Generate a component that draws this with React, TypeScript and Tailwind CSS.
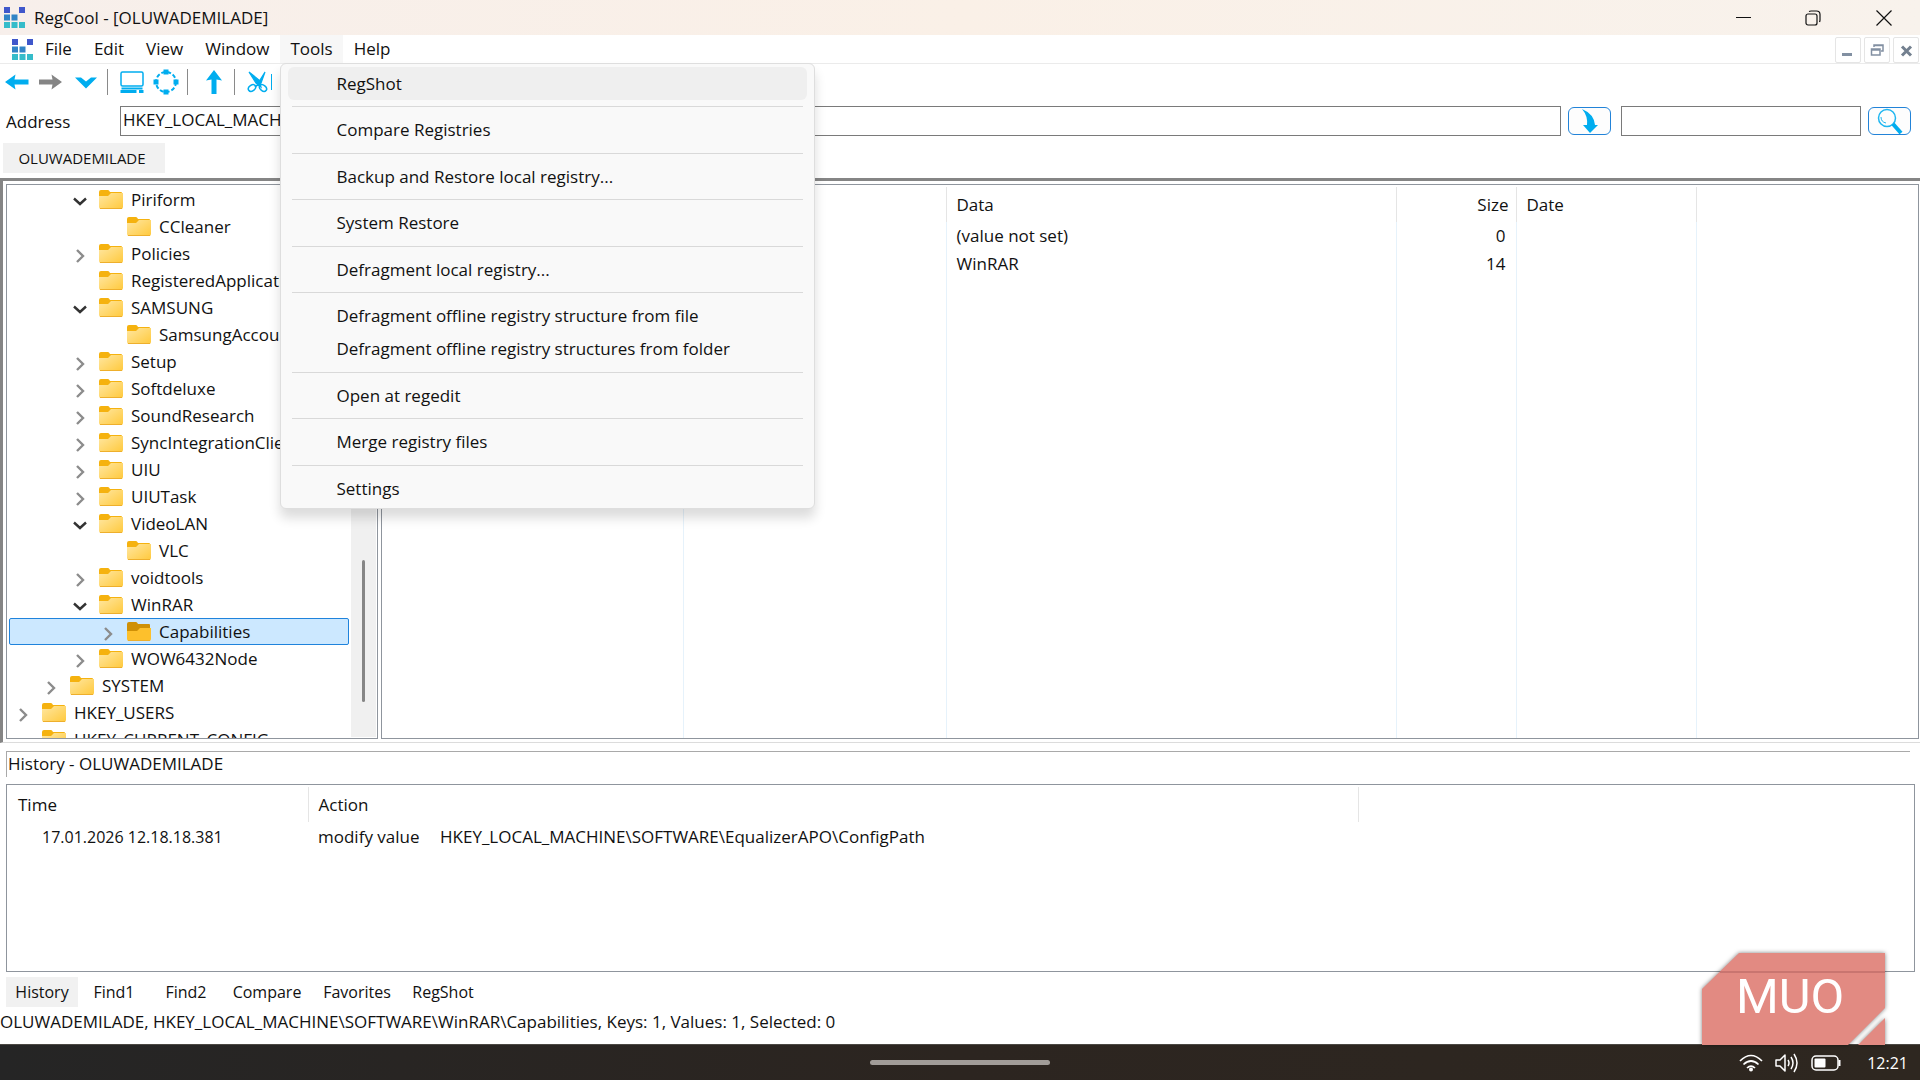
// src/App.tsx
import React, { useState } from 'react';

interface TreeNode {
  name: string;
  level: 1 | 2 | 3 | 4;
  state: 'open' | 'closed' | 'leaf';
}

const treeNodes: TreeNode[] = [
  { name: 'Piriform', level: 3, state: 'open' },
  { name: 'CCleaner', level: 4, state: 'leaf' },
  { name: 'Policies', level: 3, state: 'closed' },
  { name: 'RegisteredApplications', level: 3, state: 'leaf' },
  { name: 'SAMSUNG', level: 3, state: 'open' },
  { name: 'SamsungAccount', level: 4, state: 'leaf' },
  { name: 'Setup', level: 3, state: 'closed' },
  { name: 'Softdeluxe', level: 3, state: 'closed' },
  { name: 'SoundResearch', level: 3, state: 'closed' },
  { name: 'SyncIntegrationClients', level: 3, state: 'closed' },
  { name: 'UIU', level: 3, state: 'closed' },
  { name: 'UIUTask', level: 3, state: 'closed' },
  { name: 'VideoLAN', level: 3, state: 'open' },
  { name: 'VLC', level: 4, state: 'leaf' },
  { name: 'voidtools', level: 3, state: 'closed' },
  { name: 'WinRAR', level: 3, state: 'open' },
  { name: 'Capabilities', level: 4, state: 'closed' },
  { name: 'WOW6432Node', level: 3, state: 'closed' },
  { name: 'SYSTEM', level: 2, state: 'closed' },
  { name: 'HKEY_USERS', level: 1, state: 'closed' },
  { name: 'HKEY_CURRENT_CONFIG', level: 1, state: 'leaf' }
];

const levelPadding = {
  1: 'pl-[5px]',
  2: 'pl-[33px]',
  3: 'pl-[62px]',
  4: 'pl-[90px]'
};

// Each group is divided from the next one by a line
const toolsMenu = [
  ['RegShot'],
  ['Compare Registries'],
  ['Backup and Restore local registry...'],
  ['System Restore'],
  ['Defragment local registry...'],
  ['Defragment offline registry structure from file', 'Defragment offline registry structures from folder'],
  ['Open at regedit'],
  ['Merge registry files'],
  ['Settings']
];

const values = [
  { data: '(value not set)', size: 0 },
  { data: 'WinRAR', size: 14 }
];

const bottomTabs = [
  { name: 'History', width: 'w-[72px]' },
  { name: 'Find1', width: 'w-[72px]' },
  { name: 'Find2', width: 'w-[72px]' },
  { name: 'Compare', width: 'w-[90px]' },
  { name: 'Favorites', width: 'w-[90px]' },
  { name: 'RegShot', width: 'w-[82px]' }
];

function AppLogo() {
  return (
    <svg className="w-[23px] h-[23px] shrink-0" viewBox="0 0 23 23">
      <path d="M1 1h6v6H1zM16 1h6v6h-6z" fill="#3f57cb" />
      <path d="M1 8.500h6v6H1zM8.500 8.500h6v6h-6z" fill="#3184c6" />
      <path d="M1 16h6v6H1zM8.500 16h6v6h-6zM16 16h6v6h-6z" fill="#35bcca" />
    </svg>
  );
}

function FolderIcon({ open }: { open: boolean }) {
  return (
    <svg className="w-6 h-5 shrink-0" viewBox="0 0 24 20">
      <defs>
        <linearGradient id="folderFace" x1="0" y1="0" x2="1" y2="1">
          <stop offset="0" stopColor="#ffe7a2" />
          <stop offset="1" stopColor="#ffc93c" />
        </linearGradient>
      </defs>
      <path d="M0 2Q0 0 2 0h7q1 0 2 2h11q1 0 1 1v6H0z" fill={open ? '#cf9006' : '#f5b20f'} />
      {open ? (
        <path d="M0 9h10l3-3h11v11q0 2-2 2H2q-2 0-2-2z" fill="#fdc02c" />
      ) : (
        <path d="M0 6h9l3-3h12v14q0 2-2 2H2q-2 0-2-2z" fill="url(#folderFace)" />
      )}
      <path d="M1 18.500h22" stroke="#eeaf2c" />
    </svg>
  );
}

function Chevron({ state }: { state: TreeNode['state'] }) {
  return (
    <svg className="w-4 h-4 shrink-0 mt-1" viewBox="0 0 16 16" fill="none" strokeWidth="2.400">
      {state === 'open' && <path d="M2 4.500l6 5.500 6-5.500" stroke="#333" />}
      {state === 'closed' && <path d="M5 2l6 6-6 6" stroke="#8c8c8c" />}
    </svg>
  );
}

function ToolSeparator({ className }: { className: string }) {
  return <div className={`w-px h-[26px] bg-[#8a8a8a] ${className}`} />;
}

function Toolbar() {
  return (
    <div className="flex items-center h-9 pl-1 shrink-0">
      <button aria-label="Back" className="mr-2">
        <svg className="w-[26px] h-[18px]" viewBox="0 0 26 18" fill="#00adef">
          <path d="M1 9l10.500-7.500-1 5H24.500v5H10.500l1 5z" />
        </svg>
      </button>
      <button aria-label="Forward" className="mr-[10px]">
        <svg className="w-[26px] h-[18px]" viewBox="0 0 26 18" fill="#858585">
          <path d="M24 9L13.500 1.500l1 5H1v5h13.500l-1 5z" />
        </svg>
      </button>
      <button aria-label="History list">
        <svg className="w-6 h-[18px]" viewBox="0 0 24 18" fill="#00adef">
          <path d="M1 4.500h6l5 4 5-4h6L12 15.500z" />
        </svg>
      </button>
      <ToolSeparator className="ml-[9px] mr-[11px]" />
      <button aria-label="Computer" className="mr-2">
        <svg className="w-[26px] h-6" viewBox="0 0 26 24" fill="none" stroke="#00adef" strokeWidth="1.500">
          <rect x="2" y="2" width="22" height="14" rx="1.500" />
          <path d="M2.500 18.500h21" strokeWidth="2" />
          <path d="M1.500 21.500h16M20 21.500h4.500" strokeWidth="3" />
        </svg>
      </button>
      <button aria-label="Refresh">
        <svg className="w-[26px] h-[26px]" viewBox="0 0 26 26">
          <circle cx="13" cy="13" r="10" fill="none" stroke="#00adef" strokeWidth="2" strokeDasharray="4 2" />
          <g fill="#00adef">
            <rect x="10.500" y="0.500" width="5" height="5" />
            <rect x="10.500" y="20.500" width="5" height="5" />
            <rect x="0.500" y="10.500" width="5" height="5" />
            <rect x="20.500" y="10.500" width="5" height="5" />
          </g>
        </svg>
      </button>
      <ToolSeparator className="ml-2 mr-[18px]" />
      <button aria-label="Up">
        <svg className="w-4 h-6" viewBox="0 0 16 24" fill="#00adef">
          <path d="M8 0l8 10.500-5.500-1V24h-5V9.500L0 10.500z" />
        </svg>
      </button>
      <ToolSeparator className="ml-3 mr-3" />
      <button aria-label="Cut">
        <svg className="w-[22px] h-[22px]" viewBox="0 0 22 22" fill="none" stroke="#00adef">
          <path d="M2 1l7 11 5 4-2-7zM18 1l-5 8-5 7 6-4z" fill="#00adef" strokeWidth="1.200" />
          <ellipse cx="5" cy="17" rx="4" ry="2.800" transform="rotate(-35 5 17)" strokeWidth="1.500" />
          <ellipse cx="16" cy="17" rx="4" ry="2.800" transform="rotate(40 16 17)" strokeWidth="1.500" />
        </svg>
      </button>
      <div className="w-px h-4 ml-[2px] bg-[#00adef]" />
    </div>
  );
}

function ToolsMenu() {
  return (
    <div
      role="menu"
      className="absolute z-10 left-0 top-full w-[535px] h-[446px] pt-[3px] pb-[3px] px-[7px] flex flex-col bg-[#f9f9f9] border border-[#dedede] rounded-[6px] shadow-[0_9px_12px_rgba(0,0,0,0.14)]"
    >
      {toolsMenu.map((group, index) => (
        <React.Fragment key={group[0]}>
          {index > 0 && (
            <div className="flex-1 flex items-center px-1">
              <hr className="w-full border-[#d9d9d9]" />
            </div>
          )}
          {group.map((item) => (
            <button
              key={item}
              role="menuitem"
              className={`h-[33px] pl-[48px] shrink-0 text-left rounded-[6px] ${item === 'RegShot' ? 'bg-[#efefef]' : ''}`}
            >
              {item}
            </button>
          ))}
        </React.Fragment>
      ))}
    </div>
  );
}

function MenuBar() {
  return (
    <nav className="flex items-stretch h-[29px] shrink-0 border-b border-[#ebebeb]">
      <div className="flex items-center pl-[11px]">
        <AppLogo />
      </div>
      <button className="px-[11px]">File</button>
      <button className="px-[11px]">Edit</button>
      <button className="px-[11px]">View</button>
      <button className="px-[11px]">Window</button>
      <div className="relative flex">
        <button className="px-[10px] bg-[#f7f7f7]">Tools</button>
        <ToolsMenu />
      </div>
      <button className="px-[11px]">Help</button>
      <div className="ml-auto flex gap-[3px] pt-[2px] pr-px">
        <button aria-label="Minimize child" className="w-[26px] h-[26px] border border-[#e5e5e5] rounded-[2px]">
          <svg className="w-6 h-6" viewBox="0 0 24 24">
            <path d="M6 16.500h10" stroke="#8290a2" strokeWidth="3" />
          </svg>
        </button>
        <button aria-label="Restore child" className="w-[26px] h-[26px] border border-[#e5e5e5] rounded-[2px]">
          <svg className="w-6 h-6" viewBox="0 0 24 24" fill="none" stroke="#8290a2" strokeWidth="1.500">
            <path d="M9 9V7h9v6h-2M9 7.500h9" />
            <path d="M6.500 11h8.500v6H6.500zM6.500 12h8.500" />
          </svg>
        </button>
        <button aria-label="Close child" className="w-[26px] h-[26px] border border-[#e5e5e5] rounded-[2px]">
          <svg className="w-6 h-6" viewBox="0 0 24 24">
            <path d="M8 8.500l9 9M17 8.500l-9 9" stroke="#73808f" strokeWidth="3" />
          </svg>
        </button>
      </div>
    </nav>
  );
}

function TitleBar() {
  return (
    <header className="flex items-center h-[35px] pl-[3px] shrink-0 bg-linear-to-r from-[#f7efeb] via-[#faf0e7] to-[#f8f2ec]">
      <AppLogo />
      <h1 className="ml-2">RegCool - [OLUWADEMILADE]</h1>
      <div className="ml-auto flex items-center h-full">
        <button aria-label="Minimize" className="w-[69px] flex justify-center">
          <svg className="w-4 h-4" viewBox="0 0 16 16" stroke="#111" fill="none">
            <path d="M0 7.500h15" />
          </svg>
        </button>
        <button aria-label="Restore" className="w-[69px] flex justify-center">
          <svg className="w-4 h-4" viewBox="0 0 16 16" stroke="#111" fill="none" strokeWidth="1.200">
            <rect x="1" y="4" width="11" height="11" rx="2" />
            <path d="M4 1.500Q5 1 6 1h5.500Q15 1 15 4.500V10q0 1-.5 2" />
          </svg>
        </button>
        <button aria-label="Close" className="w-[73px] flex justify-center">
          <svg className="w-4 h-4" viewBox="0 0 16 16" stroke="#111" fill="none" strokeWidth="1.200">
            <path d="M.5.5l15 15M15.500.5l-15 15" />
          </svg>
        </button>
      </div>
    </header>
  );
}

function AddressBar() {
  const [address, setAddress] = useState('HKEY_LOCAL_MACHINE\\SOFTWARE\\WinRAR\\Capabilities');
  const [query, setQuery] = useState('');

  return (
    <div className="flex items-center mt-[6px] pl-[6px] pr-[9px] shrink-0">
      <label htmlFor="address" className="w-[114px] pt-[2px]">Address</label>
      <input
        id="address"
        type="text"
        value={address}
        onChange={(e) => setAddress(e.target.value)}
        className="flex-1 h-[30px] px-[2px] pb-1 border border-[#7a7a7a]"
      />
      <button aria-label="Go" className="w-[43px] h-7 ml-[7px] mr-[10px] flex justify-center border-[1px] border-[#2283d8] rounded-[6px] bg-[#fdfdfd]">
        <svg className="w-6 h-[26px]" viewBox="0 0 24 26">
          <path d="M4 1Q16 6 17 17l3 0-8 8-7-8 4 0Q10 8 4 1z" fill="#00adef" />
        </svg>
      </button>
      <input
        type="text"
        aria-label="Search"
        value={query}
        onChange={(e) => setQuery(e.target.value)}
        className="w-[240px] h-[30px] px-[2px] border border-[#7a7a7a]"
      />
      <button aria-label="Find" className="w-[43px] h-7 ml-[7px] flex justify-center border-[1px] border-[#2283d8] rounded-[6px] bg-[#fdfdfd]">
        <svg className="w-[26px] h-[26px]" viewBox="0 0 26 26" fill="none" stroke="#1fb6f0">
          <circle cx="10" cy="10" r="8.500" strokeWidth="1.500" />
          <path d="M4 9q0 5 5 6" strokeWidth="1" />
          <path d="M16 16l8 9" strokeWidth="4" stroke="#00adef" />
        </svg>
      </button>
    </div>
  );
}

function RegistryTree() {
  const [selected, setSelected] = useState('Capabilities');

  return (
    <div className="w-[372px] flex shrink-0 border border-[#8f959d] overflow-hidden">
      <ul role="tree" className="flex-1 min-w-0 px-[2px] pt-px">
        {treeNodes.map((node) => (
          <li
            key={node.name}
            role="treeitem"
            aria-selected={node.name === selected}
            onClick={() => setSelected(node.name)}
            className={`flex items-center h-[27px] border rounded-[2px] whitespace-nowrap ${levelPadding[node.level]} ${
              node.name === selected ? 'bg-[#cce8ff] border-[#1f83dc]' : 'border-transparent'
            }`}
          >
            <Chevron state={node.state} />
            <span className="ml-[11px]">
              <FolderIcon open={node.name === selected} />
            </span>
            <span className="ml-2">{node.name}</span>
          </li>
        ))}
      </ul>
      <div className="w-[25px] mr-px mb-px flex justify-center bg-[#f0f0f0]">
        <div className="w-[3px] h-[142px] mt-[375px] rounded-full bg-[#868686]" />
      </div>
    </div>
  );
}

function ValueList() {
  return (
    <div className="flex-1 min-w-0 pt-[2px] border border-[#8f959d] overflow-hidden">
      <table className="w-full h-full table-fixed border-collapse">
        <colgroup>
          <col className="w-[301px]" />
          <col className="w-[263px]" />
          <col className="w-[450px]" />
          <col className="w-[120px]" />
          <col className="w-[180px]" />
          <col />
        </colgroup>
        <thead>
          <tr className="h-[35px] text-left">
            <th className="border-r border-[#e5e5e5]" />
            <th className="border-r border-[#e5e5e5]" />
            <th className="px-[10px] font-normal border-r border-[#e5e5e5]">Data</th>
            <th className="px-[7px] font-normal text-right border-r border-[#e5e5e5]">Size</th>
            <th className="px-[10px] font-normal border-r border-[#e5e5e5]">Date</th>
            <th />
          </tr>
        </thead>
        <tbody>
          {values.map((value) => (
            <tr key={value.data} className="h-7">
              <td className="border-r border-[#e6f2fb]" />
              <td className="border-r border-[#e6f2fb]" />
              <td className="px-[10px] border-r border-[#e6f2fb]">{value.data}</td>
              <td className="px-[10px] text-right border-r border-[#e6f2fb]">{value.size}</td>
              <td className="border-r border-[#e6f2fb]" />
              <td />
            </tr>
          ))}
          <tr>
            <td className="border-r border-[#e6f2fb]" />
            <td className="border-r border-[#e6f2fb]" />
            <td className="border-r border-[#e6f2fb]" />
            <td className="border-r border-[#e6f2fb]" />
            <td className="border-r border-[#e6f2fb]" />
            <td />
          </tr>
        </tbody>
      </table>
    </div>
  );
}

function HistoryPanel() {
  return (
    <section className="shrink-0 pt-2 pl-[6px] pr-[5px]">
      <h2 className="h-[26px] mb-[7px] mr-[5px] pl-px border-t border-l border-[#a9a9a9]">History - OLUWADEMILADE</h2>
      <div className="h-[188px] pt-[2px] border border-[#8f959d]">
        <table className="w-full table-fixed border-collapse">
          <colgroup>
            <col className="w-[301px]" />
            <col className="w-[1050px]" />
            <col />
          </colgroup>
          <thead>
            <tr className="h-[35px] text-left">
              <th className="px-[11px] font-normal border-r border-[#e5e5e5]">Time</th>
              <th className="px-[10px] font-normal border-r border-[#e5e5e5]">Action</th>
              <th />
            </tr>
          </thead>
          <tbody>
            <tr className="h-[30px]">
              <td className="pl-[35px] text-[16px]">17.01.2026 12.18.18.381</td>
              <td className="px-[10px]">
                <span className="inline-block w-[122px]">modify value</span>
                HKEY_LOCAL_MACHINE\SOFTWARE\EqualizerAPO\ConfigPath
              </td>
              <td />
            </tr>
          </tbody>
        </table>
      </div>
    </section>
  );
}

function Taskbar() {
  return (
    <footer className="relative grid grid-cols-3 items-center h-9 shrink-0 px-3 text-[16px] text-white bg-linear-to-r from-[#252525] via-[#2c2520] to-[#2e2720] border-t border-[#4b4843]">
      <div />
      <div className="w-[180px] h-[5px] justify-self-center rounded-full bg-[#a19c98]" />
      <div className="flex items-center justify-end">
        <svg className="w-6 h-[18px] mr-3" viewBox="0 0 24 18" fill="none" stroke="#fff" strokeWidth="1.700">
          <path d="M1 7Q12-4 23 7M4.500 10.500q7.500-7 15 0M8 14q4-4 8 0" />
          <circle cx="12" cy="15.500" r="2" fill="#fff" stroke="none" />
        </svg>
        <svg className="w-6 h-5 mr-3" viewBox="0 0 24 20" fill="none" stroke="#fff" strokeWidth="1.500">
          <path d="M1 7h4l5-5v16l-5-5H1z" strokeLinejoin="round" />
          <path d="M13 7q2 3 0 6M16 4q4 6 0 12M19 1q6 9 0 18" />
        </svg>
        <svg className="w-[30px] h-4 mr-[26px]" viewBox="0 0 30 16" fill="none" stroke="#fff" strokeWidth="1.500">
          <rect x="1" y="1" width="26" height="14" rx="4" />
          <rect x="3.500" y="3.500" width="11" height="9" rx="1" fill="#fff" stroke="none" />
          <path d="M28.500 5v6" strokeWidth="2" />
        </svg>
        <time>12:21</time>
      </div>
      <Watermark />
    </footer>
  );
}

function Watermark() {
  return (
    <div className="absolute right-[33px] bottom-full w-[186px] h-[93px]">
      <svg className="absolute inset-0 w-full h-full drop-shadow-[0_0_2px_rgba(0,0,0,0.5)]" viewBox="0 0 186 93" fill="#e28a82">
        <path d="M1 37L38 1h146v55l-37 37H1z" />
        <path d="M184 66v27h-27z" />
        <path d="M19 20h165" stroke="#b0605e" />
      </svg>
      <span className="relative block pt-[21px] pl-[35px] text-[49px] leading-[48px] text-white font-[Roboto,sans-serif]">MUO</span>
    </div>
  );
}

export default function App() {
  const [activeTab, setActiveTab] = useState('History');

  return (
    <div className="flex flex-col h-screen overflow-hidden bg-white text-[#111] text-[17px] leading-[24px] font-['Open_Sans',sans-serif]">
      <TitleBar />
      <MenuBar />
      <Toolbar />
      <AddressBar />

      {/* Computer tab */}
      <div className="mt-[7px] mb-[5px] pl-[3px] shrink-0 text-[15px]">
        <button className="w-[162px] h-[30px] bg-[#f1f1f1] pr-1">OLUWADEMILADE</button>
      </div>

      {/* Tree and values */}
      <main className="flex-1 min-h-0 flex gap-[3px] pt-[3px] pl-[3px] pb-[3px] pr-px border-t-[3px] border-l-[3px] border-[#858585] border-b border-b-[#dcdcdc]">
        <RegistryTree />
        <ValueList />
      </main>

      <HistoryPanel />

      {/* Bottom tabs */}
      <div className="flex mt-[5px] pl-[6px] shrink-0 text-[16px]">
        {bottomTabs.map((tab) => (
          <button
            key={tab.name}
            onClick={() => setActiveTab(tab.name)}
            className={`h-[30px] ${tab.width} ${tab.name === activeTab ? 'bg-[#f1f1f1]' : ''}`}
          >
            {tab.name}
          </button>
        ))}
      </div>
      <p className="h-[37px] pt-[3px] shrink-0">
        OLUWADEMILADE, HKEY_LOCAL_MACHINE\SOFTWARE\WinRAR\Capabilities, Keys: 1, Values: 1, Selected: 0
      </p>
      <Taskbar />
    </div>
  );
}
